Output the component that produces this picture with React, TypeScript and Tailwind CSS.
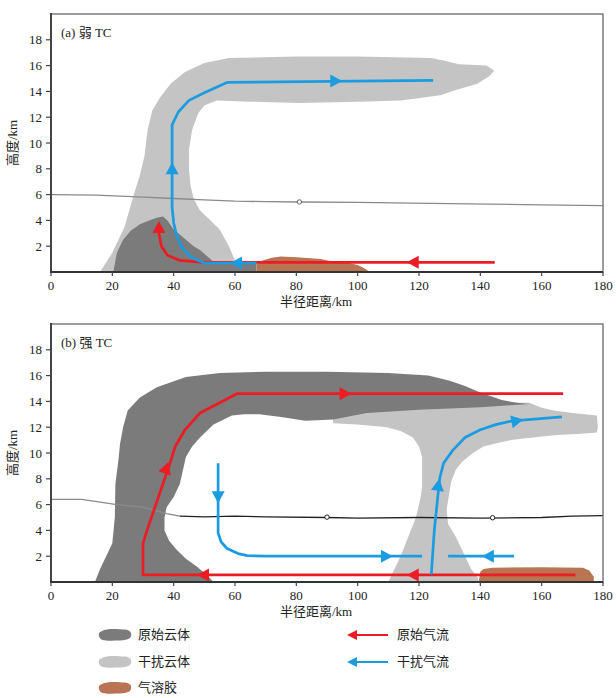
import React from "react";

const X = (km: number) => 51 + (km * 552) / 180;
const Y = (h: number) => 272 - h * 12.9;
const P = (a: number[][]) => a.map(([x, y]) => `${X(x).toFixed(1)},${Y(y).toFixed(1)}`).join(" ");

const RED = "#ec1c24";
const BLUE = "#1c9ce0";
const DARK = "#7b7b7b";
const LIGHT = "#c4c4c4";
const BROWN = "#b97453";

type HeadProps = { at: number[]; dir: number[]; color: string; len?: number; w?: number };

const Head = ({ at, dir, color, len = 12, w = 13 }: HeadProps) => {
  const tx = X(at[0]);
  const ty = Y(at[1]);
  const m = Math.hypot(dir[0], dir[1]);
  const dx = dir[0] / m;
  const dy = dir[1] / m;
  const bx = tx - dx * len;
  const by = ty - dy * len;
  const nx = -dy * (w / 2);
  const ny = dx * (w / 2);
  return (
    <polygon
      points={`${tx},${ty} ${bx + nx},${by + ny} ${bx - nx},${by - ny}`}
      fill={color}
    />
  );
};

const Flow = ({ d, color }: { d: number[][]; color: string }) => (
  <polyline points={P(d)} fill="none" stroke={color} strokeWidth={2.7} strokeLinejoin="round" />
);

const Chart = ({ label, children }: { label: string; children: React.ReactNode }) => {
  const yTicks = [2, 4, 6, 8, 10, 12, 14, 16, 18];
  const xTicks = [0, 20, 40, 60, 80, 100, 120, 140, 160, 180];
  return (
    <svg
      width={616}
      height={310}
      className="block shrink-0 font-['Liberation_Serif','Noto_Sans_CJK_SC',serif] text-[13px]"
    >
      {children}
      <rect x={51} y={14} width={552} height={258} fill="none" stroke="#6a6a6a" strokeWidth={1.3} />
      <line x1={51} y1={13} x2={51} y2={273} stroke="#444" strokeWidth={2} />
      <line x1={50} y1={272} x2={603} y2={272} stroke="#333" strokeWidth={2} />
      {yTicks.map((t) => (
        <g key={t}>
          <line x1={46} y1={Y(t)} x2={51} y2={Y(t)} stroke="#444" strokeWidth={1.2} />
          <text x={42} y={Y(t) + 4.5} textAnchor="end" fill="#222">
            {t}
          </text>
        </g>
      ))}
      {xTicks.map((t) => (
        <g key={t}>
          <line x1={X(t)} y1={272} x2={X(t)} y2={276} stroke="#444" strokeWidth={1.2} />
          <text x={X(t)} y={290} textAnchor="middle" fill="#222">
            {t}
          </text>
        </g>
      ))}
      <text x={316} y={306} textAnchor="middle" fill="#222">
        半径距离/km
      </text>
      <text x={0} y={0} textAnchor="middle" fill="#222" transform="translate(17 143) rotate(-90)">
        高度/km
      </text>
      <text x={61} y={37} fill="#222">
        {label}
      </text>
    </svg>
  );
};

const WeakTC = () => (
  <Chart label="(a) 弱 TC">
    <polygon
      fill={LIGHT}
      points={P([
        [16, 0], [20, 1.5], [24, 3.5], [27, 6], [29, 7.5], [30.5, 9], [31.5, 11], [33, 12.5], [35.5, 13.5],
        [39, 14.6], [43.7, 15.5], [50, 16.2], [58, 16.6], [80, 16.7], [100, 16.7], [124, 16.6], [128, 16.4],
        [133, 16.1], [142, 16.0], [144.5, 15.6], [143, 15.2], [139, 14.6], [132, 14.1], [127, 13.7],
        [114, 13.3], [100, 13.2], [81, 13.1], [65, 13.2], [54, 13.3], [50, 12.9], [48, 12.3], [46, 11],
        [45, 9.5], [45, 8], [45.5, 6.7], [46.5, 5.7], [48.5, 4.8], [52, 4], [55, 3.3], [58, 2], [61.6, 0],
      ])}
    />
    <polygon
      fill={DARK}
      points={P([
        [20.3, 0], [21.5, 1.5], [23.5, 2.5], [26, 3.2], [29, 3.7], [32, 4.0], [34.5, 4.2], [36.5, 4.3],
        [38, 4.0], [40, 3.3], [42, 2.9], [44, 2.5], [46.5, 2.0], [48.6, 1.7], [51, 1.2], [53, 0.8],
        [67, 0.75], [67, 0],
      ])}
    />
    <polygon
      fill={BROWN}
      points={P([
        [67, 0], [67, 0.6], [69, 0.9], [72, 1.1], [75, 1.2], [80, 1.15], [88, 1.0], [92, 0.8], [97, 0.7],
        [100, 0.55], [102, 0.3], [104, 0],
      ])}
    />
    <polyline
      fill="none"
      stroke="#8a8a8a"
      strokeWidth={1.3}
      points={P([
        [0, 6.0], [15, 5.95], [30, 5.8], [40, 5.7], [50, 5.6], [60, 5.5], [70, 5.45], [81, 5.43],
        [100, 5.4], [130, 5.3], [160, 5.2], [180, 5.15],
      ])}
    />
    <circle cx={X(81)} cy={Y(5.43)} r={2.2} fill="white" stroke="#666" strokeWidth={1} />
    <Flow
      color={RED}
      d={[
        [144.7, 0.75], [49.6, 0.75], [42, 0.9], [38, 1.3], [36, 2], [35.2, 3], [35.2, 3.5],
      ]}
    />
    <Head at={[116, 0.75]} dir={[-1, 0]} color={RED} />
    <Head at={[35.2, 3.95]} dir={[0, -1]} color={RED} />
    <Flow
      color={BLUE}
      d={[
        [67, 0.7], [50, 0.7], [46, 1.1], [43, 1.8], [41, 2.8], [40, 3.8], [39.5, 5], [39.5, 11.4],
        [41.5, 12.4], [45, 13.3], [50, 13.9], [57.4, 14.7], [124.6, 14.85],
      ]}
    />
    <Head at={[58.4, 0.7]} dir={[-1, 0]} color={BLUE} />
    <Head at={[39.5, 8.5]} dir={[0, -1]} color={BLUE} />
    <Head at={[95, 14.8]} dir={[1, 0]} color={BLUE} />
  </Chart>
);

const StrongTC = () => (
  <Chart label="(b) 强 TC">
    <polygon
      fill={LIGHT}
      points={P([
        [110, 0], [112, 1], [114, 2], [116.5, 3.5], [119, 5], [120.5, 6.5], [121, 7.4], [121, 9.7],
        [120, 10.5], [118, 11.2], [114, 11.7], [109.5, 12], [100, 12.2], [92, 12.3], [92, 12.7],
        [100, 13.2], [120, 13.6], [140, 13.9], [156, 13.9], [160, 13.5], [164, 13.3], [170, 13.1],
        [178, 12.9], [178.3, 12], [178, 11.6], [173, 11.5], [165, 11.4], [157, 11.2], [150, 11.0],
        [146, 10.8], [141, 10.5], [137.6, 10], [134, 9.3], [132, 8.7], [130.5, 7.8], [130, 7.1],
        [129, 5.6], [129.5, 4.5], [132, 3.5], [135, 2], [137, 1], [139, 0.4], [139.5, 0],
      ])}
    />
    <polygon
      fill={DARK}
      points={P([
        [14.3, 0], [16, 1], [18, 2], [20, 3], [20.8, 5], [21, 7.6], [22, 9.5], [22.5, 10.7], [23.5, 12],
        [25, 13.3], [29, 14.3], [34.5, 15.1], [44, 15.9], [55, 16.2], [70, 16.3], [90, 16.3], [110, 16.2],
        [123, 16.0], [130, 15.6], [135, 15.2], [140, 14.7], [147, 14.1], [152, 13.9], [156, 13.8],
        [150, 13.7], [140, 13.55], [120, 13.35], [103, 13.1], [92, 12.6], [83, 12.5], [75, 12.8],
        [68, 13.0], [63, 13.0], [59, 12.9], [53, 12.2], [48.6, 11.2], [46, 10.5], [44, 9.7], [42, 7.6],
        [40, 6.6], [37.7, 5.8], [37, 5], [37, 4], [38.5, 3.2], [41, 2.5], [44, 1.8], [47.5, 1.2],
        [51, 0.5], [53, 0],
      ])}
    />
    <polygon
      fill={BROWN}
      points={P([
        [139.5, 0], [140, 0.8], [141, 1.0], [144, 1.1], [160, 1.15], [173.5, 1.1], [175.5, 0.9],
        [177, 0.4], [177, 0],
      ])}
    />
    <polyline
      fill="none"
      stroke="#8a8a8a"
      strokeWidth={1.3}
      points={P([[0, 6.4], [10, 6.4], [21.5, 6.0], [30, 5.8], [37.7, 5.3], [42, 5.1]])}
    />
    <polyline
      fill="none"
      stroke="#222"
      strokeWidth={1.3}
      points={P([
        [42, 5.1], [50, 5.05], [60, 5.1], [70, 5.05], [90, 5.0], [100, 4.95], [120, 5.0], [140, 4.95],
        [160, 5.0], [170, 5.1], [180, 5.15],
      ])}
    />
    <circle cx={X(90)} cy={Y(5.03)} r={2.2} fill="white" stroke="#222" strokeWidth={1} />
    <circle cx={X(144)} cy={Y(4.98)} r={2.2} fill="white" stroke="#222" strokeWidth={1} />
    <Flow
      color={RED}
      d={[
        [171, 0.55], [30, 0.55], [30, 3], [31.3, 4], [38.8, 9.2], [40.5, 10.5], [43.7, 11.8],
        [48.6, 13.1], [55, 13.9], [60.6, 14.6], [167, 14.6],
      ]}
    />
    <Head at={[38.3, 9.3]} dir={[23, -67]} color={RED} />
    <Head at={[98, 14.6]} dir={[1, 0]} color={RED} />
    <Head at={[47.6, 0.55]} dir={[-1, 0]} color={RED} />
    <Head at={[116, 0.55]} dir={[-1, 0]} color={RED} />
    <Flow
      color={BLUE}
      d={[
        [54.5, 9.2], [54.5, 3.8], [55.5, 3.1], [57.4, 2.6], [61, 2.2], [64, 2.05], [70, 2], [121, 2],
      ]}
    />
    <Head at={[54.5, 6.1]} dir={[0, 1]} color={BLUE} />
    <Head at={[111.5, 2]} dir={[1, 0]} color={BLUE} />
    <Flow color={BLUE} d={[[151, 2], [129.5, 2]]} />
    <Head at={[140.5, 2]} dir={[-1, 0]} color={BLUE} />
    <Flow
      color={BLUE}
      d={[
        [124, 0.6], [125, 4], [126.3, 7], [126.8, 8.1], [128, 9.2], [131, 10.2], [135, 11.2], [140, 11.8],
        [145, 12.2], [150.6, 12.5], [166.6, 12.8],
      ]}
    />
    <Head at={[126.6, 8.0]} dir={[0.15, -1]} color={BLUE} />
    <Head at={[154, 12.6]} dir={[1, -0.2]} color={BLUE} />
  </Chart>
);

const Blob = ({ color }: { color: string }) => (
  <svg width={34} height={14} className="shrink-0">
    <path
      d="M4 3 C9 0 20 1 27 1.5 C32 2 34 5 33 8 C32 12 24 13 17 12.5 C10 13 3 13 1.5 9.5 C0 6 1 4 4 3 Z"
      fill={color}
    />
  </svg>
);

const LegendArrow = ({ color }: { color: string }) => (
  <svg width={42} height={12} className="shrink-0">
    <line x1={8} y1={6} x2={41} y2={6} stroke={color} strokeWidth={2} />
    <polygon points="0,6 10,1 10,11" fill={color} />
  </svg>
);

const Legend = () => (
  <div className="grid grid-cols-[249px_auto] gap-y-[6.5px] pl-[98px] pt-[5px] text-[13px] text-[#222] font-['Liberation_Serif','Noto_Sans_CJK_SC',serif]">
    <div className="flex h-[20px] items-center gap-[6px]">
      <Blob color={DARK} />
      <span>原始云体</span>
    </div>
    <div className="flex h-[20px] items-center gap-[8px]">
      <LegendArrow color={RED} />
      <span>原始气流</span>
    </div>
    <div className="flex h-[20px] items-center gap-[6px]">
      <Blob color={LIGHT} />
      <span>干扰云体</span>
    </div>
    <div className="flex h-[20px] items-center gap-[8px]">
      <LegendArrow color={BLUE} />
      <span>干扰气流</span>
    </div>
    <div className="flex h-[20px] items-center gap-[6px]">
      <Blob color={BROWN} />
      <span>气溶胶</span>
    </div>
  </div>
);

const App = () => {
  return (
    <div className="flex h-[698px] w-[616px] flex-col overflow-hidden bg-white">
      <WeakTC />
      <StrongTC />
      <Legend />
    </div>
  );
};

export default App;
